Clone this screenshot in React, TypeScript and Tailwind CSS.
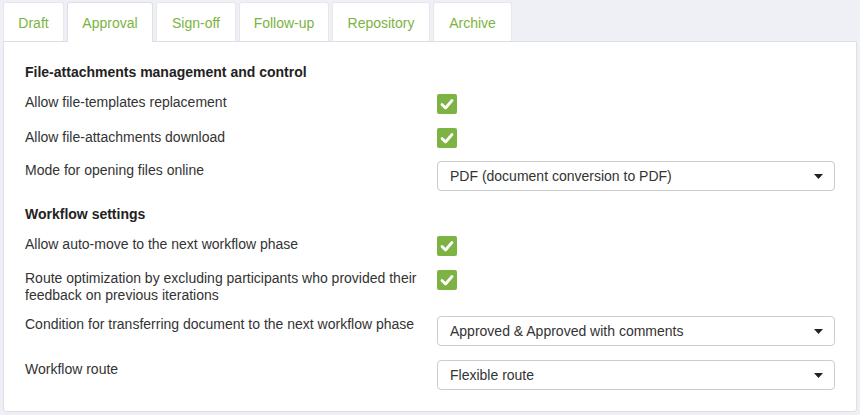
import React from "react";

const tabs: { label: string; w: string }[] = [
  { label: "Draft", w: "w-[61px]" },
  { label: "Approval", w: "w-[86px]" },
  { label: "Sign-off", w: "w-[80px]" },
  { label: "Follow-up", w: "w-[90px]" },
  { label: "Repository", w: "w-[98px]" },
  { label: "Archive", w: "w-[79px]" },
];

function Check() {
  return (
    <div className="w-[20px] h-[20px] rounded-[2px] bg-[#7cb342] flex items-center justify-center">
      <svg width="14" height="12" viewBox="0 0 14 12">
        <path d="M2 6.5 L5.5 10 L12 2.5" fill="none" stroke="#fff" strokeWidth="2.8" strokeLinecap="round" strokeLinejoin="round" />
      </svg>
    </div>
  );
}

function Select({ value }: { value: string }) {
  return (
    <div className="w-[398px] h-[30px] border border-[#cccccc] rounded-[4px] bg-white flex items-center justify-between pl-[12px] pr-[11px] pt-[1px] text-[14px] text-[#333]">
      <span>{value}</span>
      <svg width="9" height="5" viewBox="0 0 9 5">
        <path d="M0 0 L9 0 L4.5 5 Z" fill="#222" />
      </svg>
    </div>
  );
}

export default function App() {
  return (
    <div
      className="w-[860px] h-[415px] bg-[#eef0f5] pl-[3px] pt-[2px] text-[#333]"
      style={{ fontFamily: '"Liberation Sans", Arial, sans-serif' }}
    >
      <div className="flex gap-[3px] items-end relative z-10">
        {tabs.map((t) => {
          const active = t.label === "Approval";
          return (
            <div
              key={t.label}
              className={
                active
                  ? `${t.w} h-[40px] pt-[1px] flex items-center justify-center text-[14px] text-[#7cb342] bg-white border border-b-0 border-[#dcdfe6] rounded-t-[3px] -mb-px`
                  : `${t.w} h-[39px] pt-[2px] flex items-center justify-center text-[14px] text-[#7cb342] bg-white border border-b-0 border-[#e6e8ee] rounded-t-[3px]`
              }
            >
              {t.label}
            </div>
          );
        })}
      </div>
      <div className="w-[854px] h-[371px] bg-white border border-[#dcdfe6] rounded-b-[3px] pl-[21px] pr-[21px] pt-[20px] text-[14px] leading-[17px]">
        <div className="font-bold leading-[20px] text-[#222]">File-attachments management and control</div>

        <div className="flex mt-[10px]">
          <div className="w-[412px] pt-[2px]">Allow file-templates replacement</div>
          <div className="mt-[2px]"><Check /></div>
        </div>

        <div className="flex mt-[13px]">
          <div className="w-[412px] pt-[2px]">Allow file-attachments download</div>
          <div className="mt-[1px]"><Check /></div>
        </div>

        <div className="flex mt-[12px]">
          <div className="w-[412px] pt-[2px]">Mode for opening files online</div>
          <div className="mt-[1px]"><Select value="PDF (document conversion to PDF)" /></div>
        </div>

        <div className="font-bold leading-[20px] text-[#222] mt-[13px]">Workflow settings</div>

        <div className="flex mt-[10px]">
          <div className="w-[412px] pt-[2px]">Allow auto-move to the next workflow phase</div>
          <div className="mt-[2px]"><Check /></div>
        </div>

        <div className="flex mt-[12px]">
          <div className="w-[412px] pt-[2px] pr-[10px]">Route optimization by excluding participants who provided their feedback on previous iterations</div>
          <div className="mt-[2px]"><Check /></div>
        </div>

        <div className="flex mt-[10px]">
          <div className="w-[412px] pt-[2px]">Condition for transferring document to the next workflow phase</div>
          <div className="mt-[2px]"><Select value="Approved & Approved with comments" /></div>
        </div>

        <div className="flex mt-[13px]">
          <div className="w-[412px] pt-[2px]">Workflow route</div>
          <div className="mt-[1px]"><Select value="Flexible route" /></div>
        </div>
      </div>
    </div>
  );
}
